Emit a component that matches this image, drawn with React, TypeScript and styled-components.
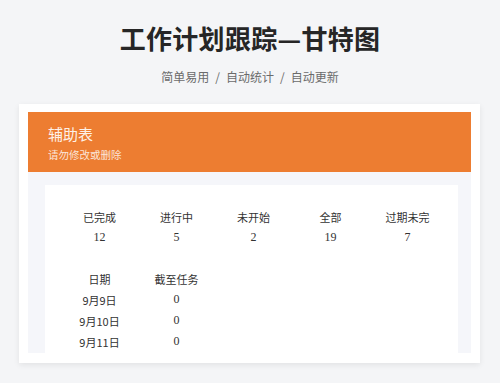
import React from "react";
import styled, { createGlobalStyle } from "styled-components";

const Global = createGlobalStyle`
  html, body { margin: 0; padding: 0; }
  body {
    background: #f4f5f7;
    font-family: "Noto Sans CJK SC", "Noto Sans", sans-serif;
    width: 500px;
    height: 383px;
    overflow: hidden;
  }
`;

const Page = styled.div`
  display: flex;
  flex-direction: column;
  align-items: stretch;
  padding-top: 22px;
`;

const Title = styled.h1`
  margin: 0;
  text-align: center;
  font-size: 26px;
  line-height: 32px;
  font-weight: 700;
  color: #262626;
  letter-spacing: 0.3px;
`;

const Subtitle = styled.div`
  margin-top: 14px;
  text-align: center;
  font-size: 12px;
  line-height: 18px;
  color: #6b6b6b;
`;

const Sep = styled.span`
  margin: 0 6px;
`;

const Card = styled.div`
  margin: 18px 20px 0 19px;
  background: #ffffff;
  padding: 8px 9px 10px 9px;
  box-shadow: 0 2px 6px rgba(0, 0, 0, 0.08);
`;

const Banner = styled.div`
  height: 60px;
  background: #ed7d31;
  padding-left: 20px;
  display: flex;
  flex-direction: column;
  justify-content: center;
  color: #fdf1e8;
  box-sizing: border-box;
  padding-top: 2px;
`;

const BannerTitle = styled.div`
  font-size: 15px;
  line-height: 22px;
`;

const BannerSub = styled.div`
  font-size: 10.5px;
  line-height: 16px;
  margin-top: 2px;
  opacity: 0.9;
`;

const Well = styled.div`
  background: #f5f6fa;
  padding: 13px 13px 0 17px;
  height: 181px;
  box-sizing: border-box;
  display: flex;
`;

const Sheet = styled.div`
  flex: 1;
  background: #ffffff;
  padding: 21px 0 0 16px;
  display: flex;
  flex-direction: column;
  gap: 20px;
`;

const Grid = styled.div<{ $cols: number }>`
  display: grid;
  grid-template-columns: repeat(${(p) => p.$cols}, 77px);
  grid-auto-rows: 21px;
`;

const Cell = styled.div<{ $num?: boolean }>`
  display: flex;
  align-items: center;
  justify-content: center;
  font-size: ${(p) => (p.$num ? "12px" : "11px")};
  color: #333333;
  font-family: ${(p) =>
    p.$num
      ? '"Liberation Serif", "Noto Sans CJK SC", serif'
      : '"Noto Sans CJK SC", sans-serif'};
`;

const stats = [
  ["已完成", "12"],
  ["进行中", "5"],
  ["未开始", "2"],
  ["全部", "19"],
  ["过期未完", "7"],
];

const dates = [
  ["9月9日", "0"],
  ["9月10日", "0"],
  ["9月11日", "0"],
];

export default function App() {
  return (
    <>
      <Global />
      <Page>
        <Title>工作计划跟踪—甘特图</Title>
        <Subtitle>
          简单易用<Sep>/</Sep>自动统计<Sep>/</Sep>自动更新
        </Subtitle>
        <Card>
          <Banner>
            <BannerTitle>辅助表</BannerTitle>
            <BannerSub>请勿修改或删除</BannerSub>
          </Banner>
          <Well>
            <Sheet>
              <Grid $cols={5}>
                {stats.map(([k]) => (
                  <Cell key={k}>{k}</Cell>
                ))}
                {stats.map(([k, v]) => (
                  <Cell key={k + "v"} $num>
                    {v}
                  </Cell>
                ))}
              </Grid>
              <Grid $cols={2}>
                <Cell>日期</Cell>
                <Cell>截至任务</Cell>
                {dates.map(([d, n]) => (
                  <React.Fragment key={d}>
                    <Cell>{d}</Cell>
                    <Cell $num>{n}</Cell>
                  </React.Fragment>
                ))}
              </Grid>
            </Sheet>
          </Well>
        </Card>
      </Page>
    </>
  );
}
